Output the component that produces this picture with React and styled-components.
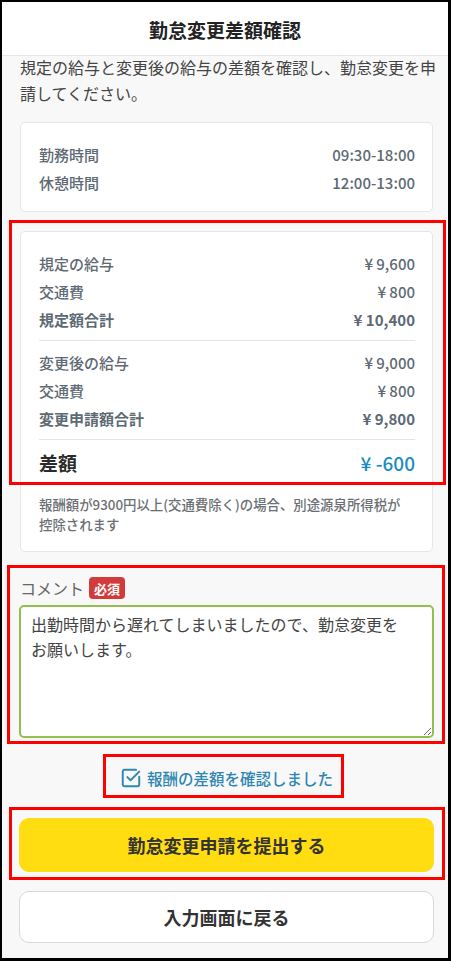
import React from "react";
import styled, { createGlobalStyle } from "styled-components";

const Global = createGlobalStyle`
  html, body { margin: 0; padding: 0; background: #fff; }
  * { box-sizing: border-box; }
  body { font-family: "Noto Sans CJK JP", "Noto Sans", sans-serif; }
`;

const Frame = styled.div`
  position: relative;
  width: 451px;
  height: 961px;
  border-style: solid;
  border-color: #000;
  border-width: 2px 3px 3px 2px;
  background: #f8f8f8;
  display: flex;
  flex-direction: column;
  overflow: hidden;
`;

const Header = styled.header`
  height: 54px;
  flex: none;
  background: #fff;
  border-bottom: 1px solid #e4e4e4;
  display: flex;
  align-items: center;
  justify-content: center;
  font-size: 19px;
  font-weight: 700;
  color: #222;
  padding-top: 2px;
`;

const Body = styled.main`
  padding: 0 15px 15px 18px;
  display: flex;
  flex-direction: column;
`;

const Lead = styled.p`
  margin: -2px -8px 0 0;
  font-size: 16px;
  line-height: 26px;
  color: #444;
`;

const Card = styled.section`
  background: #fff;
  border: 1px solid #e6e6e6;
  border-radius: 5px;
  margin-top: ${(p) => p.$mt}px;
  padding: ${(p) => p.$pad};
`;

const Row = styled.div`
  display: flex;
  justify-content: space-between;
  align-items: center;
  height: 28px;
  font-size: 15px;
  color: #5d6973;
  font-weight: ${(p) => (p.$bold ? 700 : 500)};
`;

const Divider = styled.hr`
  border: none;
  border-top: 1px solid #e3e3e3;
  margin: 7px 0 7px;
`;

const DiffRow = styled.div`
  display: flex;
  justify-content: space-between;
  align-items: center;
  height: 30px;
  font-weight: 700;
`;

const DiffLabel = styled.span`
  font-size: 19px;
  color: #2b2b2b;
`;

const DiffValue = styled.span`
  font-size: 19px;
  color: #1b8cbf;
  font-weight: 500;
`;

const Note = styled.p`
  margin: 17px 0 0;
  max-width: 368px;
  font-size: 13.4px;
  line-height: 20px;
  color: #6b6f73;
  font-weight: 500;
`;

const LabelRow = styled.div`
  margin-top: 25px;
  display: flex;
  align-items: center;
  gap: 5px;
  height: 22px;
`;

const LabelText = styled.span`
  font-size: 16px;
  color: #666;
`;

const Badge = styled.span`
  background: #d33b3b;
  color: #fff;
  font-size: 13px;
  font-weight: 700;
  border-radius: 4px;
  height: 22px;
  padding: 0 5px;
  display: inline-flex;
  align-items: center;
`;

const TextArea = styled.textarea`
  margin: 6px 0 0 -1px;
  width: 415px;
  height: 133px;
  border: 2px solid #93bf50;
  border-radius: 5px;
  padding: 5px 10px;
  font-family: "Noto Sans CJK JP", "Noto Sans", sans-serif;
  font-size: 16px;
  line-height: 25px;
  color: #444;
  background: #fff;
  outline: none;
`;

const Confirm = styled.label`
  margin-top: 28px;
  align-self: center;
  display: flex;
  align-items: center;
  gap: 5px;
  height: 24px;
  font-size: 15.5px;
  color: #2f86b2;
  font-weight: 500;
`;

const Button = styled.button`
  margin: ${(p) => p.$mt}px 0 0 -1px;
  width: 415px;
  height: ${(p) => p.$h}px;
  border-radius: 10px;
  font-family: "Noto Sans CJK JP", "Noto Sans", sans-serif;
  font-size: 18px;
  font-weight: 700;
  color: #333;
  background: ${(p) => (p.$primary ? "#ffdd10" : "#fff")};
  border: 1px solid ${(p) => (p.$primary ? "#ffdd10" : "#d8d8d8")};
`;

const Mark = styled.div`
  position: absolute;
  border: 3px solid #ff0000;
  left: ${(p) => p.$x}px;
  top: ${(p) => p.$y}px;
  width: ${(p) => p.$w}px;
  height: ${(p) => p.$h}px;
  pointer-events: none;
`;

const CheckIcon = () => (
  <svg width="22" height="22" viewBox="0 0 24 24" fill="none" stroke="#2f86b2" strokeWidth="2.1" strokeLinecap="round" strokeLinejoin="round">
    <path d="M21 10.5V19a2 2 0 0 1-2 2H5a2 2 0 0 1-2-2V5a2 2 0 0 1 2-2h12.5" />
    <path d="m8 11 3.5 3.5L21 5" />
  </svg>
);

export default function App() {
  return (
    <>
      <Global />
      <Frame>
        <Header>勤怠変更差額確認</Header>
        <Body>
          <Lead>規定の給与と変更後の給与の差額を確認し、勤怠変更を申請してください。</Lead>
          <Card $mt={16} $pad="17px 17px 15px 18px">
            <Row><span>勤務時間</span><span>09:30-18:00</span></Row>
            <Row><span>休憩時間</span><span>12:00-13:00</span></Row>
          </Card>
          <Card $mt={19} $pad="17px 17px 17px 18px">
            <Row><span>規定の給与</span><span>¥ 9,600</span></Row>
            <Row><span>交通費</span><span>¥ 800</span></Row>
            <Row $bold><span>規定額合計</span><span>¥ 10,400</span></Row>
            <Divider />
            <Row><span>変更後の給与</span><span>¥ 9,000</span></Row>
            <Row><span>交通費</span><span>¥ 800</span></Row>
            <Row $bold><span>変更申請額合計</span><span>¥ 9,800</span></Row>
            <Divider />
            <DiffRow><DiffLabel>差額</DiffLabel><DiffValue>¥ -600</DiffValue></DiffRow>
            <Note>報酬額が9300円以上(交通費除く)の場合、別途源泉所得税が控除されます</Note>
          </Card>
          <LabelRow>
            <LabelText>コメント</LabelText>
            <Badge>必須</Badge>
          </LabelRow>
          <TextArea defaultValue={"出勤時間から遅れてしまいましたので、勤怠変更を\nお願いします。"} />
          <Confirm>
            <CheckIcon />
            報酬の差額を確認しました
          </Confirm>
          <Button $primary $mt={28} $h={54}>勤怠変更申請を提出する</Button>
          <Button $mt={19} $h={52}>入力画面に戻る</Button>
        </Body>
        <Mark $x={7} $y={218} $w={437} $h={265} />
        <Mark $x={5} $y={563} $w={438} $h={179} />
        <Mark $x={101} $y={752} $w={241} $h={44} />
        <Mark $x={7} $y={805} $w={436} $h={73} />
      </Frame>
    </>
  );
}
